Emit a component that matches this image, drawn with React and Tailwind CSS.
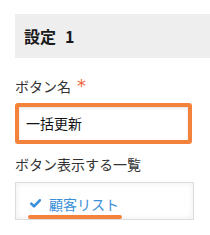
export default function App() {
  return (
    <div
      className="w-[210px] h-[235px] bg-white pt-[14px] pl-[15px] overflow-hidden"
      style={{ fontFamily: '"Noto Sans CJK JP", "Noto Sans", sans-serif' }}
    >
      <div className="h-[44px] bg-[#eeeeee] flex items-center pl-[9px]">
        <span className="text-[16px] font-bold text-[#1a1a1a]">設定</span>
        <span className="ml-[9px] text-[16px] font-bold text-[#1a1a1a]">1</span>
      </div>
      <div className="mt-[18px] h-[20px] flex items-center text-[14px] text-[#333] leading-[20px]">
        ボタン名<span className="ml-[6px] text-[18px] leading-[20px] text-[#f0643c]" style={{ fontFamily: '"DejaVu Sans", sans-serif' }}>*</span>
      </div>
      <div className="mt-[7px] w-[177px] h-[41px] border-[4px] border-[#f5823a] rounded-[3px] bg-white shadow-[inset_0_1px_3px_rgba(0,0,0,0.12)] flex items-center pl-[7px] text-[14px] text-[#111]">
        一括更新
      </div>
      <div className="mt-[10px] h-[20px] flex items-center text-[14px] text-[#333] leading-[20px]">
        ボタン表示する一覧
      </div>
      <div className="mt-[8px] w-[179px] h-[38px] border border-[#dddddd] bg-white shadow-[inset_0_0_6px_rgba(0,0,0,0.08)] pl-[12px] pt-[6px]">
        <div className="inline-flex flex-col">
          <div className="flex items-center h-[20px] pl-[2px] text-[14px] text-[#3a8fd8] leading-[20px]">
            <svg width="11" height="9" viewBox="0 0 11 9" className="mr-[8px]">
              <path d="M1.3 4.6 L4 7.3 L9.8 1.3" stroke="#3a8fd8" strokeWidth="2.6" fill="none" strokeLinecap="round" strokeLinejoin="round" />
            </svg>
            顧客リスト
          </div>
          <div className="h-[4px] w-[94px] bg-[#f5823a] rounded-full mt-[1px]" />
        </div>
      </div>
    </div>
  );
}
